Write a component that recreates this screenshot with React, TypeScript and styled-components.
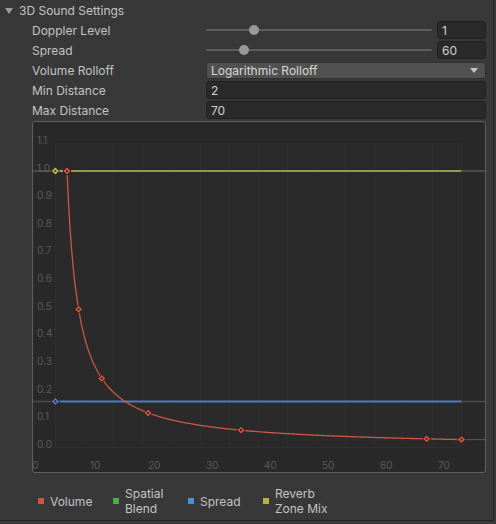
import React from 'react'
import styled, { createGlobalStyle } from 'styled-components'

const GlobalStyle = createGlobalStyle`
  html, body {
    margin: 0;
    padding: 0;
    background: #383838;
  }
  body {
    font-family: Inter, 'Noto Sans', 'Liberation Sans', sans-serif;
    -webkit-font-smoothing: antialiased;
  }
`

const Inspector = styled.div`
  width: 493px;
  height: 520px;
  background: #383838;
  border-right: 1px solid #242424;
  border-bottom: 1px solid #242424;
  color: #c4c4c4;
  font-size: 12px;
  display: flex;
  flex-direction: column;
`

const Foldout = styled.div`
  display: flex;
  align-items: center;
  height: 20px;
  padding-left: 5px;
  gap: 6px;
`

const FoldArrow = styled.span`
  width: 0;
  height: 0;
  border-left: 4px solid transparent;
  border-right: 4px solid transparent;
  border-top: 6px solid #9a9a9a;
  margin-top: 1px;
`

const PropertyRow = styled.div`
  display: flex;
  align-items: center;
  height: 20px;
  padding: 0 7px 0 32px;
`

const Label = styled.div`
  width: 174px;
  flex-shrink: 0;
  white-space: nowrap;
`

const SliderWrap = styled.div`
  flex: 1;
  display: flex;
  align-items: center;
  gap: 5px;
`

const Track = styled.div`
  position: relative;
  flex: 1;
  height: 2px;
  background: #5e5e5e;
  border-radius: 1px;
`

const Thumb = styled.div`
  position: absolute;
  top: -4px;
  width: 10px;
  height: 10px;
  margin-left: -5px;
  border-radius: 50%;
  background: #999999;
`

const Field = styled.div<{ $width?: number }>`
  box-sizing: border-box;
  ${({ $width }) => ($width ? `width: ${$width}px;` : 'flex: 1;')}
  height: 18px;
  padding: 0 4px;
  display: flex;
  align-items: center;
  background: #2a2a2a;
  border: 1px solid #212121;
  border-radius: 3px;
  color: #d2d2d2;
`

const Dropdown = styled.div`
  box-sizing: border-box;
  flex: 1;
  height: 17px;
  padding: 0 4px;
  display: flex;
  align-items: center;
  justify-content: space-between;
  background: #515151;
  border: 1px solid #303030;
  border-radius: 3px;
  color: #d8d8d8;
`

const Caret = styled.span`
  width: 0;
  height: 0;
  border-left: 4px solid transparent;
  border-right: 4px solid transparent;
  border-top: 5px solid #c4c4c4;
  margin-right: 3px;
`

const GraphBox = styled.div`
  box-sizing: border-box;
  margin: 1px 7px 0 32px;
  height: 352px;
  border: 1px solid #5f5f5f;
  border-radius: 3px;
  background: #292929;
  overflow: hidden;

  svg {
    display: block;
  }
`

const Legend = styled.div`
  display: flex;
  align-items: center;
  padding-left: 38px;
  margin-top: 13px;
`

const LegendItem = styled.div`
  display: flex;
  align-items: center;
  gap: 6px;
  width: 75px;
  line-height: 15px;
`

const Swatch = styled.span<{ $color: string }>`
  width: 6px;
  height: 6px;
  flex-shrink: 0;
  background: ${({ $color }) => $color};
`

const RED = '#cf5640'
const YELLOW = '#bdbd5c'
const BLUE = '#4c7cc4'
const GREY = '#6e6e6e'

// graph space: distance -> x, value -> y (inside the box border)
const X = (d: number) => 22.4 + 5.8 * d
const Y = (v: number) => 325.5 - 276.5 * v

function Key({ x, y, color }: { x: number; y: number; color: string }) {
  return (
    <g>
      <polygon
        points={`${x},${y - 4} ${x + 4},${y} ${x},${y + 4} ${x - 4},${y}`}
        fill={color}
        stroke="#2e1610"
        strokeWidth={0.9}
      />
      <circle cx={x} cy={y} r={1.1} fill="#3a1a12" />
    </g>
  )
}

function RolloffGraph() {
  const w = 452
  const right = X(70)
  const pts: string[] = [`${X(0)},${Y(1)}`]
  for (let d = 2; d <= 70; d += 0.25) pts.push(`${X(d).toFixed(2)},${Y(2 / d).toFixed(2)}`)
  const spread = 60 / 360
  const grid: number[] = []
  for (let d = 0; d <= 70; d += 5) grid.push(X(d))
  const yTicks = [1.1, 1.0, 0.9, 0.8, 0.7, 0.6, 0.5, 0.4, 0.3, 0.2, 0.1, 0.0]
  const xTicks = [0, 10, 20, 30, 40, 50, 60, 70]
  const keys = [2, 4, 8, 16, 32, 64, 70]

  return (
    <svg width={w} height={350} viewBox={`0 0 ${w} 350`}>
      <rect x={X(0)} y={Y(1.1)} width={right - X(0)} height={Y(0) - Y(1.1)} fill="#2a2a2a" stroke="#303030" />
      {grid.map((gx) => (
        <line key={gx} x1={gx} x2={gx} y1={Y(1.1)} y2={Y(0)} stroke="#303030" strokeWidth={1} />
      ))}
      <g fontFamily="Inter, 'Noto Sans', sans-serif" fontSize={10} fill="#5a5a5a">
        {yTicks.map((v) => (
          <text key={v} x={4} y={Y(v) + 0.5}>
            {v.toFixed(1)}
          </text>
        ))}
        {xTicks.map((n) => (
          <text key={n} x={5.8 * n - 1} y={347}>
            {n}
          </text>
        ))}
      </g>

      {/* extensions beyond the curve range */}
      <line x1={0} x2={X(0)} y1={Y(1)} y2={Y(1)} stroke={GREY} />
      <line x1={right} x2={w} y1={Y(1)} y2={Y(1)} stroke={GREY} />
      <line x1={0} x2={X(0)} y1={Y(spread)} y2={Y(spread)} stroke="#4a4a4a" strokeWidth={1.5} />
      <line x1={right} x2={w} y1={Y(spread)} y2={Y(spread)} stroke="#4a4a4a" strokeWidth={1.5} />
      <line x1={right} x2={w} y1={Y(2 / 70)} y2={Y(2 / 70)} stroke="#555555" />

      <line x1={X(0)} x2={right} y1={Y(spread)} y2={Y(spread)} stroke={BLUE} strokeWidth={2} />
      <polyline points={pts.join(' ')} fill="none" stroke={RED} strokeWidth={1.3} />
      <line x1={X(0)} x2={right} y1={Y(1)} y2={Y(1)} stroke={YELLOW} strokeWidth={1.3} />

      <Key x={X(0)} y={Y(1)} color={YELLOW} />
      <Key x={X(0)} y={Y(spread)} color={BLUE} />
      {keys.map((d) => (
        <Key key={d} x={X(d)} y={Y(2 / d)} color={RED} />
      ))}
    </svg>
  )
}

function SliderField({ value, min, max }: { value: number; min: number; max: number }) {
  const pct = ((value - min) / (max - min)) * 100
  return (
    <SliderWrap>
      <Track>
        <Thumb style={{ left: `${pct}%` }} />
      </Track>
      <Field $width={49}>{value}</Field>
    </SliderWrap>
  )
}

export default function App() {
  return (
    <>
      <GlobalStyle />
      <Inspector>
        <Foldout>
          <FoldArrow />
          <span>3D Sound Settings</span>
        </Foldout>
        <PropertyRow>
          <Label>Doppler Level</Label>
          <SliderField value={1} min={0} max={4.7} />
        </PropertyRow>
        <PropertyRow>
          <Label>Spread</Label>
          <SliderField value={60} min={0} max={360} />
        </PropertyRow>
        <PropertyRow>
          <Label>Volume Rolloff</Label>
          <Dropdown>
            <span>Logarithmic Rolloff</span>
            <Caret />
          </Dropdown>
        </PropertyRow>
        <PropertyRow>
          <Label>Min Distance</Label>
          <Field>2</Field>
        </PropertyRow>
        <PropertyRow>
          <Label>Max Distance</Label>
          <Field>70</Field>
        </PropertyRow>
        <GraphBox>
          <RolloffGraph />
        </GraphBox>
        <Legend>
          <LegendItem>
            <Swatch $color="#d4533f" />
            <span>Volume</span>
          </LegendItem>
          <LegendItem>
            <Swatch $color="#3fb53f" />
            <span>
              Spatial
              <br />
              Blend
            </span>
          </LegendItem>
          <LegendItem>
            <Swatch $color="#4b8ee0" />
            <span>Spread</span>
          </LegendItem>
          <LegendItem>
            <Swatch $color="#b8b43a" />
            <span>
              Reverb
              <br />
              Zone Mix
            </span>
          </LegendItem>
        </Legend>
      </Inspector>
    </>
  )
}
